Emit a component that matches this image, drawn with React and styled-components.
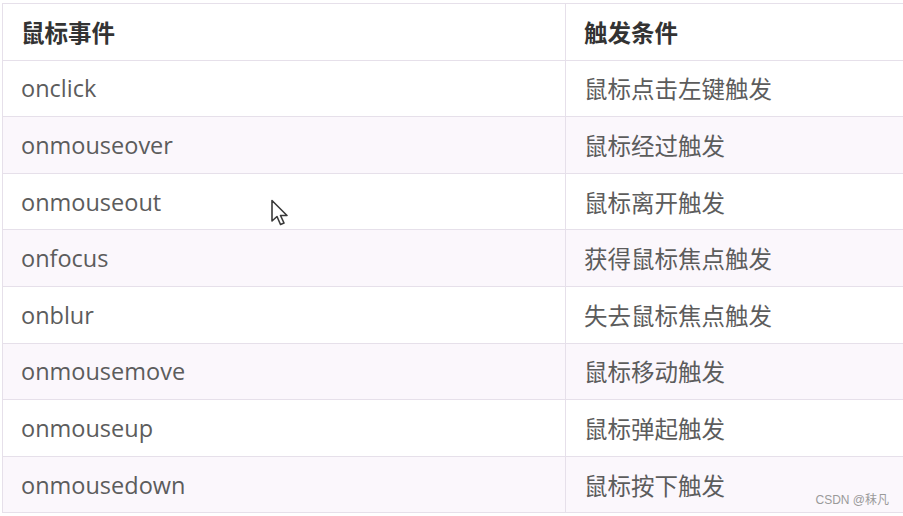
import React from 'react'
import styled, { createGlobalStyle } from 'styled-components'

const GlobalStyle = createGlobalStyle`
  html, body {
    margin: 0;
    padding: 0;
    background: #ffffff;
    overflow: hidden;
  }
  body {
    font-family: "Open Sans", "Noto Sans CJK SC", sans-serif;
  }
`

const rows = [
  ['onclick', '鼠标点击左键触发'],
  ['onmouseover', '鼠标经过触发'],
  ['onmouseout', '鼠标离开触发'],
  ['onfocus', '获得鼠标焦点触发'],
  ['onblur', '失去鼠标焦点触发'],
  ['onmousemove', '鼠标移动触发'],
  ['onmouseup', '鼠标弹起触发'],
  ['onmousedown', '鼠标按下触发'],
]

const Page = styled.div`
  position: relative;
  width: 903px;
  height: 516px;
  overflow: hidden;
  padding: 3px 0 0 2px;
  box-sizing: border-box;
`

const Table = styled.div`
  width: 960px;
  border-top: 1px solid #e6e0ea;
  border-left: 1px solid #e6e0ea;
`

const Row = styled.div`
  display: grid;
  grid-template-columns: 562px 1fr;
  height: 56.6px;
  box-sizing: border-box;
  border-bottom: 1px solid #e6e0ea;
  background: ${p => (p.$shaded ? '#fbf7fc' : '#ffffff')};
`

const Cell = styled.div`
  display: flex;
  align-items: center;
  padding-left: 18px;
  border-left: ${p => (p.$second ? '1px solid #e6e0ea' : 'none')};
  font-family: "Open Sans", "Noto Sans CJK SC", sans-serif;
  font-size: 23.5px;
  font-weight: ${p => (p.$head ? 700 : 400)};
  color: ${p => (p.$head ? '#333333' : '#5c5c5c')};
  white-space: nowrap;
`

const Cursor = styled.svg`
  position: absolute;
  left: 270px;
  top: 199px;
`

const Watermark = styled.div`
  position: absolute;
  right: 14px;
  bottom: 9px;
  font-family: "Liberation Sans", "Noto Sans CJK SC", sans-serif;
  font-size: 12px;
  color: #9a9a9a;
`

export default function App() {
  return (
    <Page>
      <GlobalStyle />
      <Table>
        <Row>
          <Cell $head>鼠标事件</Cell>
          <Cell $head $second>触发条件</Cell>
        </Row>
        {rows.map(([ev, cond], i) => (
          <Row key={ev} $shaded={i % 2 === 1}>
            <Cell>{ev}</Cell>
            <Cell $second>{cond}</Cell>
          </Row>
        ))}
      </Table>
      <Cursor width="22" height="30" viewBox="0 0 22 30">
        <path
          d="M2 1.5 L2 22 L7 17.5 L10.5 25.5 L14 24 L10.5 16.5 L17 16.5 Z"
          fill="#ffffff"
          stroke="#3a3a3a"
          strokeWidth="1.6"
          strokeLinejoin="round"
        />
      </Cursor>
      <Watermark>CSDN @秣凡</Watermark>
    </Page>
  )
}
